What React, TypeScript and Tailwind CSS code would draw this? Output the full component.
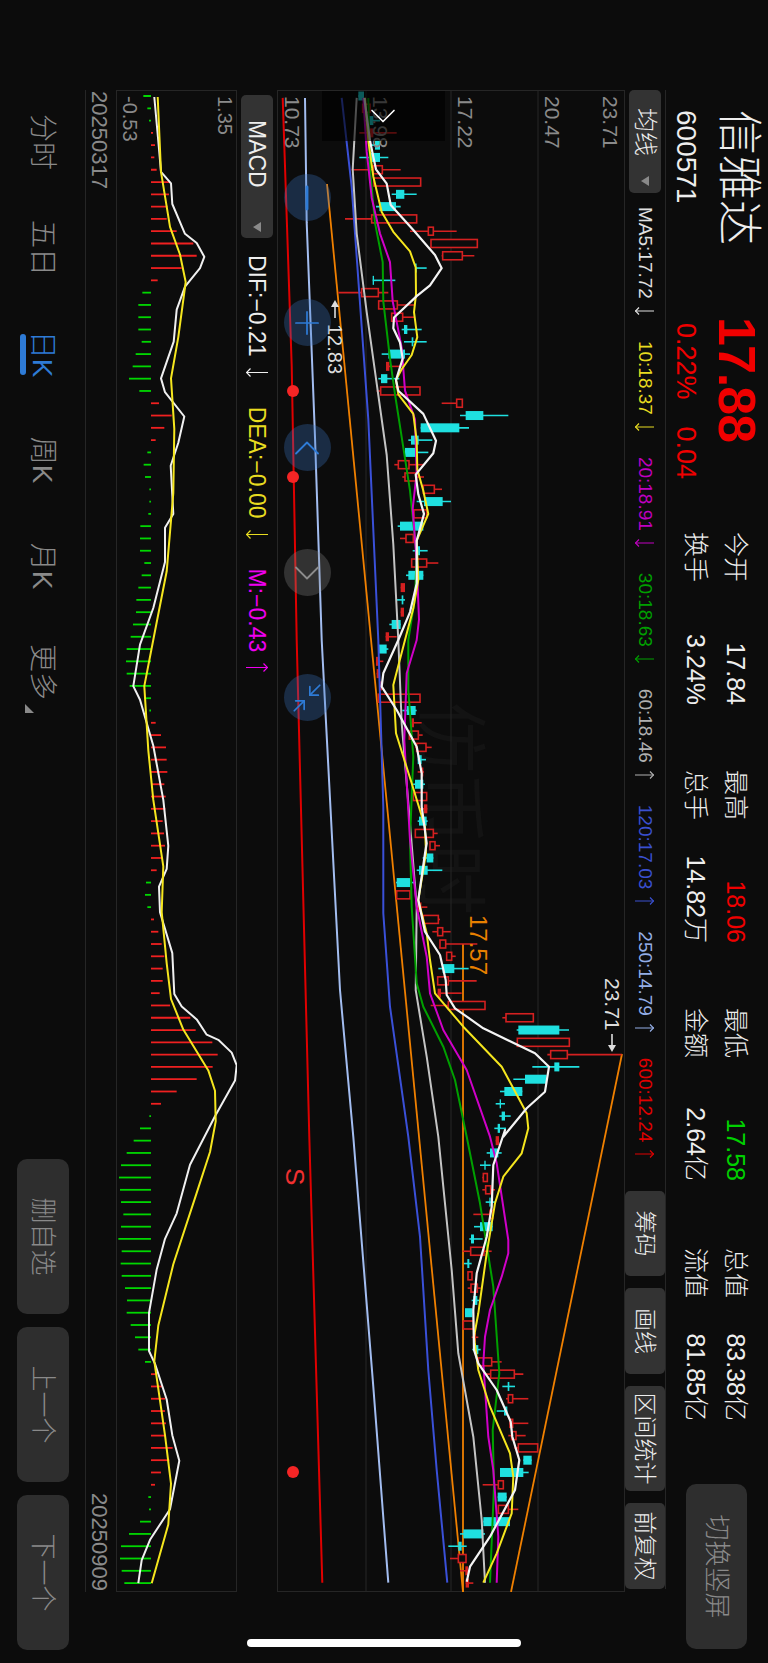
import { ChevronLeft, ChevronRight, Minimize2, Minus, Plus } from 'lucide-react';

// the whole page is a landscape layout turned a quarter clockwise
const FONT = "[font-family:'Liberation_Sans','Noto_Sans_CJK_SC',sans-serif]";

// traced polylines: flat [value, position, ...] lists, one per zoomed strip of the chart
type Trace = { a?: number[]; b?: number[]; c?: number[] };

const toPoints = (t: Trace) => {
  const out: string[] = [];
  const push = (list: number[] | undefined, f: (p: number) => number) => {
    if (!list) return;
    for (let i = 0; i < list.length; i += 2) {
      out.push(`${f(list[i + 1]).toFixed(1)},${(355 - list[i] / 3).toFixed(1)}`);
    }
  };
  push(t.a, (p) => p / 2.8 - 10);
  push(t.b, (p) => p / 3 + 550);
  push(t.c, (p) => p / 3 + 1030);
  return out.join(' ');
};

const macdPoints = (a: number[], b: number[]) => {
  const out: string[] = [];
  for (let i = 0; i < a.length; i += 2) {
    out.push(`${(a[i + 1] / 2.178 - 10).toFixed(1)},${(152 - a[i] / 3).toFixed(1)}`);
  }
  for (let i = 0; i < b.length; i += 2) {
    out.push(`${(b[i + 1] / 1.96 + 710).toFixed(1)},${(152 - b[i] / 3).toFixed(1)}`);
  }
  return out.join(' ');
};

const maLines: { color: string; width: number; trace: Trace }[] = [
  {
    color: '#e00000',
    width: 2,
    trace: { a: [38, 50, 65, 800, 80, 1568], b: [118, 1490], c: [157, 1388] },
  },
  {
    color: '#a3bdf0',
    width: 2,
    trace: { a: [105, 50, 110, 400, 135, 1000, 155, 1568], b: [210, 1050, 250, 1490], c: [310, 800, 355, 1388] },
  },
  {
    color: '#3a50d8',
    width: 2,
    trace: {
      a: [215, 50, 245, 300, 295, 950, 325, 1568],
      b: [340, 500, 340, 820, 360, 1100, 415, 1490],
      c: [450, 350, 475, 750, 500, 1050, 532, 1388],
    },
  },
  {
    color: '#c4c4c4',
    width: 2,
    trace: {
      a: [260, 50, 248, 250, 260, 430, 290, 650, 320, 850, 350, 1050, 370, 1300, 385, 1568],
      b: [395, 250, 420, 550, 440, 800, 437, 1050, 470, 1250, 505, 1490],
      c: [520, 200, 545, 450, 565, 700, 610, 950, 635, 1200, 645, 1388],
    },
  },
  {
    color: '#00a000',
    width: 2,
    trace: {
      a: [295, 50, 300, 250, 315, 400, 338, 510, 340, 620, 360, 780, 375, 880, 395, 1000, 420, 1150, 440, 1330, 435, 1450, 415, 1568],
      b: [415, 150, 430, 350, 420, 600, 425, 800, 440, 1030, 460, 1100, 520, 1220, 555, 1320, 590, 1490],
      c: [630, 250, 670, 500, 688, 760, 668, 930, 672, 1100, 660, 1388],
    },
  },
  {
    color: '#d000c8',
    width: 2,
    trace: {
      a: [280, 50, 290, 200, 305, 330, 330, 430, 360, 510, 368, 620, 395, 750, 405, 870, 435, 950, 440, 1100, 428, 1200, 440, 1350, 447, 1510, 440, 1568],
      b: [410, 100, 403, 300, 420, 600, 440, 800, 470, 950, 480, 1060, 520, 1170, 590, 1290, 660, 1490],
      c: [680, 130, 715, 360, 715, 400, 695, 470, 660, 570, 645, 650, 640, 730, 655, 950, 670, 1050, 685, 1250, 680, 1388],
    },
  },
  {
    color: '#f5e61e',
    width: 2,
    trace: {
      a: [285, 50, 295, 170, 310, 270, 335, 370, 370, 425, 420, 480, 437, 525, 438, 600, 432, 650, 442, 720, 425, 770, 395, 810, 378, 840, 385, 880, 430, 935, 440, 1010, 442, 1090, 460, 1150, 475, 1215, 440, 1290, 445, 1400, 430, 1480, 405, 1568],
      b: [370, 135, 378, 280, 425, 430, 465, 560, 468, 640, 445, 780, 470, 880, 480, 960, 495, 1060, 580, 1160, 695, 1280, 770, 1420, 775, 1465],
      c: [755, 100, 700, 170, 675, 250, 665, 310, 650, 400, 625, 580, 612, 650, 625, 750, 660, 860, 720, 1000, 730, 1070, 725, 1180, 680, 1300, 640, 1388],
    },
  },
  {
    color: '#f4f4f4',
    width: 2.2,
    trace: {
      a: [283, 50, 300, 170, 310, 215, 318, 250, 350, 290, 362, 350, 430, 420, 495, 490, 515, 527, 480, 575, 440, 605, 372, 665, 370, 695, 390, 735, 398, 780, 378, 840, 385, 870, 460, 935, 498, 1010, 490, 1045, 437, 1105, 445, 1160, 462, 1215, 440, 1290, 440, 1410, 420, 1490, 385, 1568],
      b: [340, 100, 335, 140, 380, 210, 440, 320, 455, 400, 455, 500, 470, 610, 465, 640, 445, 780, 465, 875, 510, 945, 527, 1020, 530, 1065, 555, 1105, 640, 1165, 795, 1240, 837, 1280, 825, 1355, 770, 1405, 700, 1490],
      c: [705, 30, 670, 135, 665, 260, 650, 350, 620, 460, 610, 570, 612, 690, 625, 730, 680, 810, 722, 905, 727, 950, 748, 1020, 735, 1110, 660, 1250, 600, 1340, 590, 1385],
    },
  },
];

// [wick low, wick high, body low, body high, kind] kind: 0 hollow red, 1 cyan, 2 solid red
const candles: number[][] = [
  [265, 282, 265, 282, 1], [278, 300, 278, 300, 0], [285, 330, 295, 310, 1], [268, 380, 300, 310, 2],
  [300, 330, 315, 330, 1], [268, 355, 300, 330, 1], [245, 392, 310, 337, 0], [312, 452, 312, 452, 0],
  [365, 440, 378, 403, 1], [318, 392, 328, 378, 1], [225, 440, 305, 440, 0], [420, 560, 475, 490, 0],
  [483, 622, 483, 622, 0], [515, 613, 518, 577, 0], [435, 470, 435, 440, 1], [308, 376, 308, 312, 1],
  [205, 355, 275, 325, 0], [326, 435, 326, 382, 0], [365, 435, 365, 398, 0], [395, 455, 402, 412, 1],
  [402, 470, 425, 430, 1], [335, 420, 355, 405, 1], [348, 395, 348, 358, 2], [325, 388, 333, 352, 1],
  [320, 450, 332, 450, 0], [515, 577, 560, 577, 0], [570, 715, 587, 640, 1], [452, 597, 452, 568, 1],
  [415, 487, 423, 446, 1], [405, 475, 405, 437, 1], [373, 462, 385, 417, 0], [397, 462, 405, 440, 0],
  [460, 516, 460, 493, 0], [440, 543, 462, 518, 1], [432, 470, 432, 470, 0], [383, 460, 390, 460, 1],
  [390, 430, 408, 430, 0], [428, 473, 443, 450, 1], [425, 505, 425, 470, 0], [408, 460, 415, 460, 1],
  [392, 405, 392, 405, 2], [380, 405, 395, 400, 1], [392, 402, 392, 402, 2], [358, 392, 365, 392, 1],
  [347, 380, 347, 357, 2], [325, 355, 325, 350, 1], [318, 340, 318, 328, 2], [320, 330, 320, 330, 2],
  [328, 336, 328, 336, 2], [325, 450, 325, 450, 0], [397, 440, 410, 437, 1], [425, 455, 425, 432, 2],
  [418, 458, 418, 445, 0], [435, 485, 440, 468, 0], [443, 468, 443, 455, 1], [443, 462, 455, 460, 2],
  [425, 465, 435, 460, 1], [430, 470, 430, 470, 0], [450, 472, 462, 472, 2], [443, 473, 447, 470, 1],
  [436, 503, 436, 490, 0], [480, 510, 480, 495, 0], [458, 490, 470, 490, 1], [440, 517, 447, 473, 1],
  [378, 436, 380, 420, 1], [380, 420, 380, 420, 0], [440, 472, 446, 452, 0], [460, 510, 460, 505, 0],
  [487, 542, 503, 518, 0], [510, 622, 510, 527, 0], [530, 557, 530, 545, 0], [505, 596, 518, 553, 1],
  [503, 620, 503, 535, 0], [503, 575, 503, 513, 2], [482, 645, 535, 645, 0], [697, 790, 708, 790, 0],
  [740, 897, 745, 868, 1], [742, 898, 742, 898, 0], [832, 1055, 842, 892, 0], [787, 928, 853, 868, 1],
  [730, 830, 765, 830, 1], [690, 757, 703, 757, 1], [677, 705, 689, 693, 1], [688, 722, 695, 705, 1],
  [673, 708, 683, 690, 1], [677, 687, 677, 687, 2], [650, 695, 660, 685, 1], [630, 662, 643, 647, 1],
  [637, 652, 640, 652, 0], [637, 675, 647, 662, 0], [647, 675, 658, 662, 1], [610, 665, 660, 668, 0],
  [612, 668, 630, 668, 1], [598, 638, 603, 612, 1], [578, 665, 602, 642, 0], [582, 605, 592, 598, 1],
  [594, 606, 594, 606, 0], [593, 632, 603, 622, 0], [605, 628, 610, 622, 1], [585, 607, 585, 607, 1],
  [580, 610, 580, 610, 0], [605, 625, 612, 618, 2], [607, 632, 618, 625, 1], [625, 695, 625, 665, 0],
  [640, 760, 662, 733, 0], [697, 735, 713, 718, 1], [708, 775, 715, 728, 0], [680, 712, 702, 712, 1],
  [720, 775, 720, 728, 0], [715, 767, 725, 738, 0], [733, 803, 745, 803, 0], [760, 785, 760, 785, 1],
  [690, 776, 690, 760, 1], [638, 700, 685, 700, 0], [683, 710, 683, 710, 1], [685, 745, 685, 715, 0],
  [640, 720, 640, 720, 1], [570, 645, 580, 640, 1], [535, 590, 565, 575, 1], [540, 588, 565, 588, 0],
  [570, 594, 586, 594, 2], [587, 610, 587, 597, 2],
];

// end of each MACD bar, same scale as the trace; 198 is the zero line
const macdBars = [
  175, 187, 192, 204, 210, 208, 215, 255, 252, 248, 245, 275, 325, 335, 290, 218, 172, 160, 160, 160, 170, 152, 143, 132, 163,
  222, 260, 238, 212, 187, 176, 180, 193, 193, 190, 166, 165, 165, 178, 170, 160, 154, 153, 144, 137, 125, 123, 125, 134, 178,
  193, 212, 228, 243, 245, 247, 238, 242, 241, 233, 237, 240, 232, 215, 183, 180, 187, 207, 220, 230, 238, 233, 233, 224, 255,
  316, 332, 382, 398, 383, 335, 275, 228, 193, 165, 146, 125, 108, 102, 105, 108, 115, 108, 100, 110, 107, 110, 120, 126, 125,
  137, 150, 160, 180, 212, 232, 240, 240, 243, 240, 263, 253, 228, 210, 190, 192, 165, 132, 108, 105, 110, 118,
];

const difLine = macdPoints(
  [208, 37, 222, 150, 228, 200, 258, 225, 262, 270, 300, 335, 335, 355, 358, 385, 345, 410, 300, 450, 275, 500, 266, 570, 228, 650, 240, 680, 298, 733, 280, 790, 257, 840, 265, 945, 240, 975, 240, 1050, 205, 1150, 165, 1230, 145, 1320, 165, 1350, 205, 1450, 235, 1568],
  [250, 90, 245, 135, 222, 170, 225, 220, 262, 300, 268, 380, 290, 405, 335, 430, 365, 460, 400, 470, 440, 495, 455, 520, 450, 550, 390, 620, 315, 715, 275, 810, 240, 860, 215, 920, 192, 1005, 192, 1080, 210, 1105, 245, 1175, 262, 1245, 283, 1295, 255, 1390, 195, 1450, 170, 1490, 160, 1535],
);
const deaLine = macdPoints(
  [218, 37, 228, 200, 255, 320, 285, 380, 302, 440, 280, 560, 258, 650, 268, 760, 265, 900, 245, 1070, 210, 1200, 178, 1320, 190, 1460, 205, 1568],
  [235, 130, 230, 220, 245, 320, 258, 390, 295, 450, 370, 530, 390, 570, 392, 630, 375, 690, 335, 770, 265, 910, 220, 1030, 208, 1100, 240, 1245, 258, 1340, 250, 1420, 200, 1535],
);

const maLegend: { text: string; up: boolean; cls: string }[] = [
  { text: 'MA5:17.72', up: false, cls: 'text-[#e0e0e0]' },
  { text: '10:18.37', up: false, cls: 'text-[#e8dc20]' },
  { text: '20:18.91', up: false, cls: 'text-[#c000c0]' },
  { text: '30:18.63', up: false, cls: 'text-[#00a000]' },
  { text: '60:18.46', up: true, cls: 'text-[#b0b0b0]' },
  { text: '120:17.03', up: true, cls: 'text-[#3a50d0]' },
  { text: '250:14.79', up: true, cls: 'text-[#94aee6]' },
  { text: '600:12.24', up: true, cls: 'text-[#e00000]' },
];

const stats = [
  { top: ['今开', '17.84', 'text-[#eeeeee]'], bottom: ['换手', '3.24%'], gap: 'ml-0' },
  { top: ['最高', '18.06', 'text-[#f00000]'], bottom: ['总手', '14.82万'], gap: 'ml-[65px]' },
  { top: ['最低', '17.58', 'text-[#00d000]'], bottom: ['金额', '2.64亿'], gap: 'ml-[65px]' },
  { top: ['总值', '83.38亿', 'text-[#eeeeee]'], bottom: ['流值', '81.85亿'], gap: 'ml-[67px]' },
];

const priceLabels = [
  { text: '23.71', cls: 'top-[3px]' },
  { text: '20.47', cls: 'top-[61px]' },
  { text: '17.22', cls: 'top-[148px]' },
  { text: '13.98', cls: 'top-[233px]' },
  { text: '10.73', cls: 'top-[321px]' },
];

const tabs = ['分时', '五日', '日K', '周K', '月K', '更多'];

const Triangle = () => (
  <svg width="10" height="8" viewBox="0 0 10 8" className="shrink-0">
    <polygon points="0,0 10,0 5,8" fill="#8a8a8a" />
  </svg>
);

// long thin trend arrow used after the indicator values
const TrendArrow = ({ up, big }: { up: boolean; big?: boolean }) => {
  const h = big ? 22 : 19;
  const w = big ? 9 : 8;
  return (
    <svg width={w} height={h} viewBox={`0 0 ${w} ${h}`} className="shrink-0" fill="none" stroke="currentColor" strokeWidth="1.2">
      <line x1={w / 2} x2={w / 2} y1="0" y2={h} />
      {up ? (
        <polyline points={`0.5,${w / 2} ${w / 2},0.5 ${w - 0.5},${w / 2}`} />
      ) : (
        <polyline points={`0.5,${h - w / 2} ${w / 2},${h - 0.5} ${w - 0.5},${h - w / 2}`} />
      )}
    </svg>
  );
};

// stubby arrow next to the high and low marks on the chart
const MarkArrow = ({ left }: { left?: boolean }) => (
  <svg width="18" height="8" viewBox="0 0 18 8" className={`shrink-0 ${left ? 'rotate-180' : ''}`}>
    <line x1="0" x2="12" y1="4" y2="4" stroke="#dddddd" strokeWidth="1.6" />
    <polygon points="11,0 18,4 11,8" fill="#dddddd" />
  </svg>
);

const ToolCircle = ({ grey, children }: { grey?: boolean; children: React.ReactNode }) => (
  <div
    className={`flex h-[47px] w-[47px] items-center justify-center rounded-full ${
      grey ? 'bg-[#8a8a8a]/30 text-[#8c8c8c]' : 'bg-[#3a78c8]/30 text-[#2e7bd6]'
    }`}
  >
    {children}
  </div>
);

const MainChart = () => (
  <div className="relative h-[348px] w-[1502px]">
    <div className="absolute left-[612px] top-[138px] flex h-[72px] w-[214px] items-center text-[71px] leading-none text-[#131313]">
      <span>仿</span>
      <span>币</span>
      <span>时</span>
    </div>
    <svg width="1502" height="348" viewBox="0 0 1502 348" className="absolute left-0 top-0">
      <rect x="0.5" y="0.5" width="1501" height="347" fill="none" stroke="#262626" />
      <line x1="0" x2="1502" y1="87" y2="87" stroke="#262626" />
      <line x1="0" x2="1502" y1="174" y2="174" stroke="#262626" />
      <line x1="0" x2="1502" y1="259" y2="259" stroke="#262626" />
      {/* drawn trend lines */}
      <polyline points="94,298 1502,162" fill="none" stroke="#f08000" strokeWidth="1.8" />
      <polyline points="854,162 1502,162" fill="none" stroke="#f08000" strokeWidth="1.8" />
      <polyline points="964,3 1502,114" fill="none" stroke="#f08000" strokeWidth="1.8" />
      {candles.map((c, i) => {
        const x = 6 + 12.29 * i;
        const color = c[4] === 1 ? '#1fe0e0' : '#d42020';
        const y = 355 - c[3] / 3;
        const h = Math.max((c[3] - c[2]) / 3, 1);
        return (
          <g key={i}>
            <line x1={x} x2={x} y1={355 - c[1] / 3} y2={355 - c[0] / 3} stroke={color} strokeWidth="1.6" />
            {c[4] === 0 ? (
              <rect x={x - 4} y={y} width="8" height={h} fill="#0c0c0c" stroke={color} strokeWidth="1.6" />
            ) : (
              <rect x={x - 4.5} y={y} width="9" height={h} fill={color} />
            )}
          </g>
        );
      })}
      {maLines.map((m) => (
        <polyline
          key={m.color}
          points={toPoints(m.trace)}
          fill="none"
          stroke={m.color}
          strokeWidth={m.width}
          strokeLinejoin="round"
        />
      ))}
      <circle cx="301" cy="332" r="6" fill="#f52525" />
      <circle cx="387" cy="332" r="6" fill="#f52525" />
      <circle cx="1382" cy="332" r="6" fill="#f52525" />
    </svg>
    {priceLabels.map((p) => (
      <span key={p.text} className={`absolute left-[6px] text-[21px] leading-[24px] text-[#8a8a8a] ${p.cls}`}>
        {p.text}
      </span>
    ))}
    {/* dark tip box over the first candles */}
    <div className="absolute left-[1px] top-[180px] flex h-[123px] w-[50px] items-center justify-center bg-black/60">
      <ChevronRight size={44} strokeWidth={0.9} className="shrink-0 text-white" />
    </div>
    <div className="absolute left-[210px] top-[280px] flex items-center gap-[6px] text-[20px] leading-[20px] text-[#dddddd]">
      <MarkArrow left />
      <span>12.83</span>
    </div>
    <div className="absolute left-[888px] top-[3px] flex items-center gap-[3px] text-[21px] leading-[20px] text-[#dddddd]">
      <span>23.71</span>
      <MarkArrow />
    </div>
    <span className="absolute left-[825px] top-[136px] text-[24px] leading-[22px] text-[#e88000]">17.57</span>
    <span className="absolute left-[1078px] top-[320px] text-[26px] leading-[20px] text-[#f03030]">S</span>
    <div className="absolute left-[84px] top-[294px] flex gap-[78px]">
      <ToolCircle>
        <Minus size={38} strokeWidth={1.8} className="shrink-0" />
      </ToolCircle>
      <ToolCircle>
        <Plus size={38} strokeWidth={1.1} className="shrink-0" />
      </ToolCircle>
      <ToolCircle>
        <ChevronLeft size={44} strokeWidth={1} className="shrink-0" />
      </ToolCircle>
      <ToolCircle grey>
        <ChevronRight size={44} strokeWidth={1} className="shrink-0" />
      </ToolCircle>
      <ToolCircle>
        <Minimize2 size={34} strokeWidth={1.2} className="shrink-0 -scale-x-100" />
      </ToolCircle>
    </div>
  </div>
);

const MacdChart = () => (
  <div className="relative h-[121px] w-[1502px]">
    <svg width="1502" height="121" viewBox="0 0 1502 121" className="absolute left-0 top-0">
      <rect x="0.5" y="0.5" width="1501" height="120" fill="none" stroke="#262626" />
      {macdBars.map((v, i) => {
        const x = 6 + 12.29 * i;
        return (
          <line
            key={i}
            x1={x}
            x2={x}
            y1={86}
            y2={152 - v / 3}
            stroke={v > 198 ? '#f02020' : '#00d800'}
            strokeWidth="1.8"
          />
        );
      })}
      <polyline points={difLine} fill="none" stroke="#f0f0f0" strokeWidth="2" strokeLinejoin="round" />
      <polyline points={deaLine} fill="none" stroke="#f5e61e" strokeWidth="2" strokeLinejoin="round" />
    </svg>
    <span className="absolute left-[6px] top-[2px] text-[20px] leading-[20px] text-[#8a8a8a]">1.35</span>
    <span className="absolute left-[6px] top-[97px] text-[20px] leading-[20px] text-[#8a8a8a]">-0.53</span>
  </div>
);

export default function App() {
  return (
    <div className={`relative h-[1663px] w-[768px] overflow-hidden bg-[#0c0c0c] ${FONT}`}>
      <div className="flex h-[768px] w-[1663px] origin-top-left translate-x-[768px] rotate-90 flex-col">
        {/* quote header */}
        <div className="flex h-[102px] pl-[110px] text-[#eeeeee]">
          <div className="w-[207px]">
            <div className="mt-[7px] text-[45px] font-light leading-[46px]">信雅达</div>
            <div className="mt-[17px] text-[28px] leading-[24px]">600571</div>
          </div>
          <div className="w-[215px] text-[#f00000]">
            <div className="mt-[4px] text-[52px] font-bold leading-[54px] tracking-[-1px]">17.88</div>
            <div className="ml-[6px] mt-[12px] flex gap-[27px] text-[27px] leading-[24px]">
              <span>0.22%</span>
              <span>0.04</span>
            </div>
          </div>
          {stats.map((s) => (
            <div key={s.top[0]} className={`mt-[18px] w-[173px] text-[25px] font-light leading-[28px] ${s.gap}`}>
              <div className="flex justify-between">
                <span>{s.top[0]}</span>
                <span className={s.top[2]}>{s.top[1]}</span>
              </div>
              <div className="mt-[12px] flex justify-between">
                <span>{s.bottom[0]}</span>
                <span>{s.bottom[1]}</span>
              </div>
            </div>
          ))}
          <button className="ml-[63px] mt-[21px] h-[61px] w-[165px] rounded-[10px] bg-[#2e2e2e] text-[26px] font-light text-[#8a8a8a]">
            切换竖屏
          </button>
        </div>
        <div className="ml-[90px] h-px w-[1499px] shrink-0 bg-[#262626]" />

        {/* moving average legend */}
        <div className="ml-[90px] flex h-[40px] w-[1499px] items-center text-[19px] leading-[22px]">
          <div className="flex h-[32px] w-[103px] items-center rounded-[5px] bg-[#333333] pl-[18px] pr-[7px] text-[24px] font-light text-[#eeeeee]">
            <span className="flex-1">均线</span>
            <Triangle />
          </div>
          <div className="ml-[14px] flex gap-[26px]">
            {maLegend.map((m) => (
              <span key={m.text} className={`flex items-center gap-[8px] whitespace-nowrap ${m.cls}`}>
                {m.text}
                <TrendArrow up={m.up} />
              </span>
            ))}
          </div>
          <div className="ml-auto flex h-full gap-[12px] text-[23px] font-light text-[#eeeeee]">
            <button className="w-[85px] rounded-[5px] bg-[#333333]">筹码</button>
            <button className="w-[86px] rounded-[5px] bg-[#333333]">画线</button>
            <button className="w-[105px] rounded-[5px] bg-[#333333]">区间统计</button>
            <button className="w-[86px] rounded-[5px] bg-[#333333]">前复权</button>
          </div>
        </div>

        <div className="ml-[90px]">
          <MainChart />
        </div>

        {/* indicator legend */}
        <div className="ml-[95px] mt-[4px] flex h-[32px] items-center text-[23px] leading-[26px]">
          <div className="flex h-[32px] w-[143px] items-center rounded-[5px] bg-[#333333] pl-[25px] pr-[6px] text-[#eeeeee]">
            <span className="flex-1">MACD</span>
            <Triangle />
          </div>
          <div className="ml-[17px] flex gap-[30px]">
            <span className="flex items-center gap-[11px] text-[#eeeeee]">
              DIF:−0.21
              <TrendArrow up={false} big />
            </span>
            <span className="flex items-center gap-[11px] text-[#e8dc20]">
              DEA:−0.00
              <TrendArrow up={false} big />
            </span>
            <span className="flex items-center gap-[11px] text-[#f000f0]">
              M:−0.43
              <TrendArrow up big />
            </span>
          </div>
        </div>

        <div className="ml-[90px] mt-[4px]">
          <MacdChart />
        </div>

        <div className="ml-[91px] mt-[2px] flex h-[28px] w-[1500px] items-center justify-between text-[22px] text-[#8a8a8a]">
          <span>20250317</span>
          <span>20250909</span>
        </div>

        {/* period tabs and bottom actions */}
        <div className="ml-[90px] h-px w-[1502px] shrink-0 bg-[#262626]" />
        <div className="flex flex-1 pl-[89px]">
          <div className="flex pt-[26px]">
            {tabs.map((t) => (
              <div key={t} className="relative h-[36px] w-[106px] text-center text-[28px] font-light leading-[34px]">
                <span className={t === '日K' ? 'text-[#2e7bd6]' : 'text-[#8a8a8a]'}>{t}</span>
                {t === '日K' && <div className="mx-auto mt-[-1px] h-[6px] w-[41px] rounded-full bg-[#2e7bd6]" />}
                {t === '更多' && (
                  <svg width="9" height="9" viewBox="0 0 9 9" className="absolute right-[12px] top-[25px]">
                    <polygon points="0,9 9,9 9,0" fill="#8a8a8a" />
                  </svg>
                )}
              </div>
            ))}
          </div>
          <div className="ml-auto flex gap-[13px] pr-[13px] pt-[16px]">
            {['删自选', '上一个', '下一个'].map((b) => (
              <button
                key={b}
                className="h-[52px] w-[155px] rounded-[10px] bg-[#2e2e2e] text-[26px] font-light text-[#8a8a8a]"
              >
                {b}
              </button>
            ))}
          </div>
        </div>
      </div>
      <div className="absolute bottom-[16px] left-[247px] h-[8px] w-[274px] rounded-full bg-white" />
    </div>
  );
}
